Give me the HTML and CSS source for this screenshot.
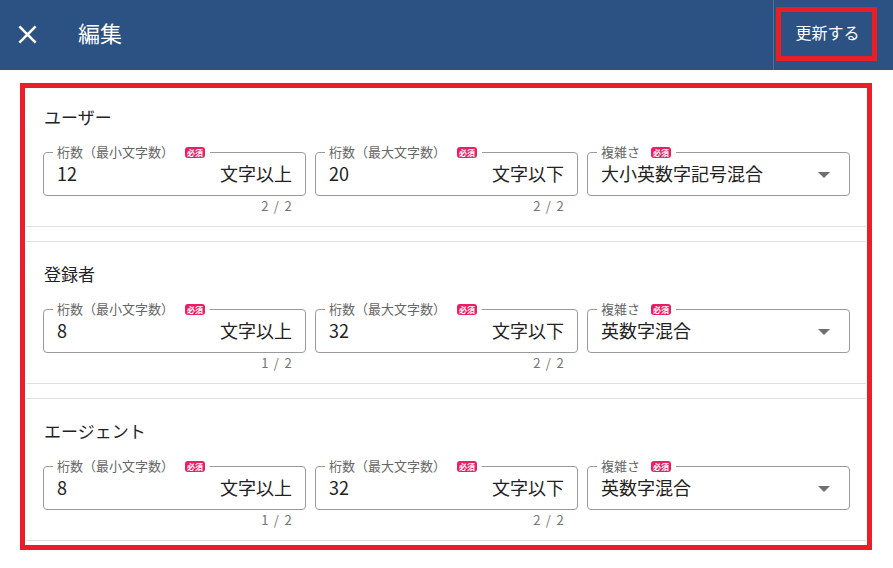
FILE: index.html
```html
<!DOCTYPE html>
<html lang="ja">
<head>
    <meta charset="UTF-8">
    <meta name="viewport" content="width=device-width, initial-scale=1.0">
    <title>編集</title>
    <link rel="stylesheet" href="styles.css">
</head>
<body>
    <header class="app-bar">
        <button class="close-btn" aria-label="閉じる">
            <svg width="31" height="31" viewBox="0 0 24 24"><path fill="#fff" d="M19 6.41L17.59 5 12 10.59 6.41 5 5 6.41 10.59 12 5 17.59 6.41 19 12 13.41 17.59 19 19 17.59 13.41 12z"/></svg>
        </button>
        <h1 class="app-title">編集</h1>
        <div class="spacer"></div>
        <div class="bar-divider"></div>
        <button class="save-btn">更新する</button>
    </header>

    <main class="content">
        <div class="highlight">
            <section class="card">
                <h2 class="card-title">ユーザー</h2>
                <div class="fields">
                    <div class="field">
                        <div class="field-box">
                            <span class="field-label">桁数（最小文字数）<span class="badge">必須</span></span>
                            <span class="value">12</span>
                            <span class="suffix">文字以上</span>
                        </div>
                        <div class="counter">2 / 2</div>
                    </div>
                    <div class="field">
                        <div class="field-box">
                            <span class="field-label">桁数（最大文字数）<span class="badge">必須</span></span>
                            <span class="value">20</span>
                            <span class="suffix">文字以下</span>
                        </div>
                        <div class="counter">2 / 2</div>
                    </div>
                    <div class="field">
                        <div class="field-box select">
                            <span class="field-label">複雑さ<span class="badge">必須</span></span>
                            <span class="value">大小英数字記号混合</span>
                            <span class="caret"></span>
                        </div>
                    </div>
                </div>
            </section>

            <section class="card">
                <h2 class="card-title">登録者</h2>
                <div class="fields">
                    <div class="field">
                        <div class="field-box">
                            <span class="field-label">桁数（最小文字数）<span class="badge">必須</span></span>
                            <span class="value">8</span>
                            <span class="suffix">文字以上</span>
                        </div>
                        <div class="counter">1 / 2</div>
                    </div>
                    <div class="field">
                        <div class="field-box">
                            <span class="field-label">桁数（最大文字数）<span class="badge">必須</span></span>
                            <span class="value">32</span>
                            <span class="suffix">文字以下</span>
                        </div>
                        <div class="counter">2 / 2</div>
                    </div>
                    <div class="field">
                        <div class="field-box select">
                            <span class="field-label">複雑さ<span class="badge">必須</span></span>
                            <span class="value">英数字混合</span>
                            <span class="caret"></span>
                        </div>
                    </div>
                </div>
            </section>

            <section class="card">
                <h2 class="card-title">エージェント</h2>
                <div class="fields">
                    <div class="field">
                        <div class="field-box">
                            <span class="field-label">桁数（最小文字数）<span class="badge">必須</span></span>
                            <span class="value">8</span>
                            <span class="suffix">文字以上</span>
                        </div>
                        <div class="counter">1 / 2</div>
                    </div>
                    <div class="field">
                        <div class="field-box">
                            <span class="field-label">桁数（最大文字数）<span class="badge">必須</span></span>
                            <span class="value">32</span>
                            <span class="suffix">文字以下</span>
                        </div>
                        <div class="counter">2 / 2</div>
                    </div>
                    <div class="field">
                        <div class="field-box select">
                            <span class="field-label">複雑さ<span class="badge">必須</span></span>
                            <span class="value">英数字混合</span>
                            <span class="caret"></span>
                        </div>
                    </div>
                </div>
            </section>
        </div>
    </main>
</body>
</html>
```

FILE: styles.css
```css
body {
    margin: 0;
    background-color: #fff;
    font-family: "Noto Sans CJK JP", "Noto Sans", sans-serif;
    color: #222;
}

.app-bar {
    display: flex;
    align-items: center;
    height: 70px;
    padding-left: 12px;
    background-color: #2b5283;
    color: #fff;
}

.close-btn {
    display: flex;
    padding: 0;
    margin-top: -1px;
    border: none;
    background: none;
}

.app-title {
    margin: -7px 0 0 35px;
    font-size: 22px;
    font-weight: 400;
}

.spacer {
    flex: 1;
}

.bar-divider {
    align-self: stretch;
    width: 1px;
    background-color: rgba(255, 255, 255, 0.18);
}

.save-btn {
    align-self: flex-start;
    width: 101px;
    height: 54px;
    margin: 7px 16px 0 2px;
    border: 5px solid #e81f27;
    background: none;
    color: #fff;
    font-family: inherit;
    font-size: 16px;
    padding: 0 0 4px 2px;
}

.content {
    padding: 13px 21px 0 20px;
}

.highlight {
    border: 5px solid #e81f27;
    padding: 0 1px 4px;
}

.card {
    border-top: 1px solid #e0e0e0;
    border-bottom: 1px solid #e0e0e0;
    padding: 20px 16px 12px 17px;
    margin-top: 14px;
}

.card:first-child {
    border-top: none;
    margin-top: 0;
    padding-top: 17px;
}

.card-title {
    margin: 0 0 23px 1px;
    font-size: 17px;
    font-weight: 400;
    line-height: 24px;
    color: #222;
}

.fields {
    display: grid;
    grid-template-columns: repeat(3, 1fr);
    gap: 9px;
    align-items: start;
}

.field-box {
    position: relative;
    display: flex;
    align-items: center;
    height: 44px;
    box-sizing: border-box;
    padding: 0 13px 0 13px;
    border: 1px solid #9a9a9a;
    border-radius: 4px;
}

.field-label {
    position: absolute;
    top: -9px;
    left: 9px;
    display: flex;
    align-items: center;
    padding: 0 5px 0 4px;
    background-color: #fff;
    font-size: 13px;
    line-height: 16px;
    color: #666;
}

.badge {
    margin-left: 11px;
    padding: 1px 2px;
    border-radius: 3px;
    background-color: #e91e63;
    color: #fff;
    font-size: 8px;
    font-weight: 700;
    line-height: 9px;
}

.value {
    flex: 1;
    margin-top: -2px;
    font-size: 18px;
    color: #222;
}

.suffix {
    margin-top: -2px;
    font-size: 18px;
    color: #222;
}

.select .caret {
    width: 0;
    height: 0;
    margin: 1px 6px 0 0;
    border-left: 6px solid transparent;
    border-right: 6px solid transparent;
    border-top: 6px solid #6f6f6f;
}

.counter {
    margin-top: 2px;
    padding-right: 13px;
    text-align: right;
    font-size: 13px;
    line-height: 16px;
    color: #757575;
    letter-spacing: 1.3px;
}
```
